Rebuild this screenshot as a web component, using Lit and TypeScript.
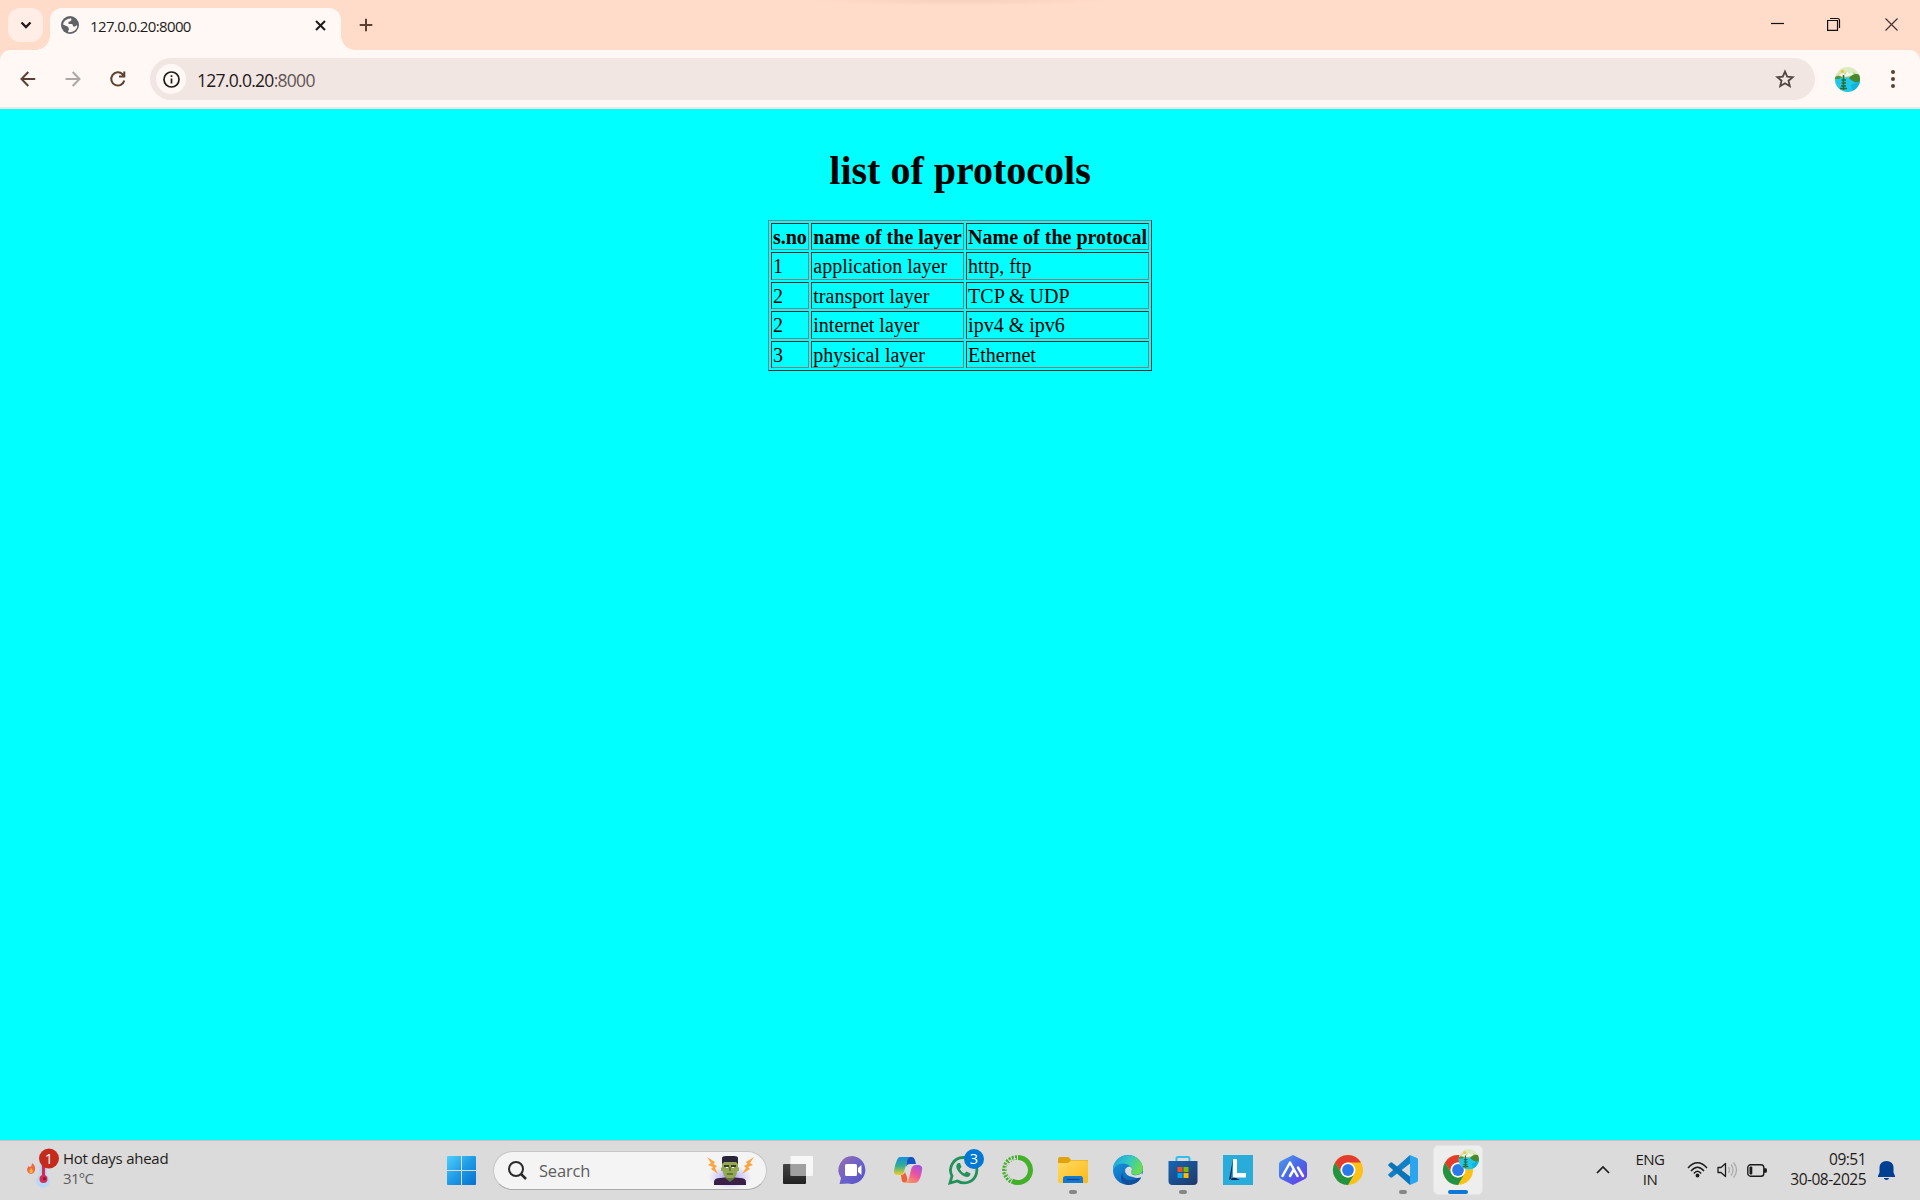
import { LitElement, html, svg, css } from "lit";
import { customElement } from "lit/decorators.js";

const chromeLogo = svg`
  <circle cx="15" cy="15" r="15" fill="#fbc116"/>
  <path d="M2 7.500A15 15 0 0 1 28 7.500H15A7.500 7.500 0 0 0 8.500 18.750Z" fill="#e33b2e"/>
  <path d="M2 7.500A15 15 0 0 0 15 30L21.500 18.750A7.500 7.500 0 0 1 8.500 18.750Z" fill="#229342"/>
  <circle cx="15" cy="15" r="7.500" fill="#fff"/><circle cx="15" cy="15" r="5.900" fill="#2a7be9"/>`;

const landscape = (id: string) => svg`
  <defs><clipPath id=${id}><circle cx="12.500" cy="12.500" r="12.500"/></clipPath></defs>
  <g clip-path="url(#${id})">
    <rect width="25" height="25" fill="#dcebc0"/>
    <path d="M0 10 5 6 8 8 12 4 15 7 18 5 25 9V12H0Z" fill="#b5cf96"/>
    <path d="M3 8 8 6 10 8 12 4 15 7 17 5 19 8 14 9 9 10Z" fill="#f5f6e6"/>
    <circle cx="7.500" cy="4.500" r="1.800" fill="#f4c04c"/>
    <rect y="10.500" width="25" height="15" fill="#1fc8ea"/>
    <path d="M0 10Q4 8 7 10.500L4 12H0Z" fill="#4f9636"/>
    <path d="M14 11Q19 5 25 8V15Q20 17 14 11Z" fill="#47892c"/>
    <path d="M16 18 25 14V22L18 25Z" fill="#0fb5dc"/>
    <path d="M8.500 8V23M6.500 13H11M6.500 16H11M6 19H11M5 21.500H12" stroke="#2c6b2c" stroke-width="1.500" fill="none"/>
  </g>`;

const appIcons = [
  { name: "Task view", run: "", art: svg`
    <defs><linearGradient id="tv" x2="0" y2="1"><stop stop-color="#444"/><stop offset="1" stop-color="#222"/></linearGradient></defs>
    <rect y="9" width="23" height="20" rx="1" fill="url(#tv)"/><rect x="7.500" y="1" width="22.500" height="20" rx="1" fill="#fff" fill-opacity=".78"/>
    <path d="M7.500 9H23V21H7.500Z" fill="#888" fill-opacity=".68"/>` },
  { name: "Chat", run: "", art: svg`
    <defs><linearGradient id="ch" x2="1" y2="1"><stop stop-color="#9c6bab"/><stop offset=".5" stop-color="#6c63c8"/><stop offset="1" stop-color="#5552c8"/></linearGradient></defs>
    <path d="M15 1A14 14 0 1 1 10 28.500L1.500 29 3 23A14 14 0 0 1 15 1Z" fill="url(#ch)"/>
    <rect x="7" y="9" width="12" height="12" rx="1.500" fill="#fff"/><path d="M20 13 23.500 10V20L20 17Z" fill="#fff"/>` },
  { name: "Copilot", run: "", art: svg`
    <defs><linearGradient id="ca" x2="0" y2="1"><stop stop-color="#168fdf"/><stop offset=".5" stop-color="#35ad91"/><stop offset="1" stop-color="#f1ce20"/></linearGradient>
    <linearGradient id="cb" x1=".8" y1="0" x2=".2" y2="1"><stop stop-color="#a452e5"/><stop offset=".5" stop-color="#ee559b"/><stop offset="1" stop-color="#ff9a5a"/></linearGradient></defs>
    <path d="M14 2H19Q21 2 22 5L23 9H17Q14 9 13 12Z" fill="#1554c4"/>
    <path d="M7 2H17Q14.500 3 13.500 8L11 17Q10 20 7 20H4Q1 20 1 16Q2 9 4 5Q5 2 7 2Z" fill="url(#ca)"/>
    <path d="M8 20Q11 20 12 17L14 22Q15 27 12 27.500Q9 28 8.500 24Z" fill="#ef6138"/>
    <path d="M23 10H26Q30 11 29 15Q28 22 26 25Q25 28 21 28H12Q15 27 16 23L18 15Q19 10 23 10Z" fill="url(#cb)"/>` },
  { name: "WhatsApp", run: "", art: svg`
    <path d="M15.500 2.500A12.700 12.700 0 1 1 9.500 26L2 28 4 21A12.700 12.700 0 0 1 15.500 2.500Z" fill="none" stroke="#22915b" stroke-width="2.800"/>
    <path d="M10.500 8C8 9 7.500 12 10 16Q14 21.500 19 22Q22 22 22.500 18.500L18.500 16.500 16.500 18.500Q13.500 17.500 11.800 14L13.500 12 12 8Z" fill="#22915b"/>
    <circle cx="26" cy="4" r="10" fill="#0078d4"/><text x="26" y="9.200" class="badge">3</text>` },
  { name: "Anaconda", run: "", art: svg`
    <path d="M15 2.500A12.500 12.500 0 1 1 9 26" fill="none" stroke="#43b02a" stroke-width="5"/>
    <path d="M14 2.500A12.500 12.500 0 0 0 9 26.500" fill="none" stroke="#43b02a" stroke-width="4.500" stroke-dasharray="2 1.100"/>
    <path d="M13 3.500A11.500 11.500 0 0 0 8 24.500" fill="none" stroke="#dbdbdb" stroke-width="1.200" stroke-dasharray="3 1.500"/>` },
  { name: "Explorer", run: "dot", art: svg`
    <defs><linearGradient id="fo" x2="1" y2="1"><stop stop-color="#ffdb63"/><stop offset="1" stop-color="#fbb917"/></linearGradient></defs>
    <path d="M0 4Q0 2 2 2H10Q11 2 13 5H29Q30 5 30 7V12H0Z" fill="#e2a10d"/><path d="M0 8H10L13 5.500H28Q30 5.500 30 7V27Q30 28 28.500 28H1.500Q0 28 0 26.500Z" fill="url(#fo)"/>
    <path d="M5 28V23.500Q5 21 7.500 21H22.500Q25 21 25 23.500V28Z" fill="#1379cf"/><path d="M8.500 24.500H21.500" stroke="#0c4b91" stroke-width="1.300"/>` },
  { name: "Edge", run: "", art: svg`
    <defs><linearGradient id="ea" x1="0" x2="1" y2=".4"><stop stop-color="#1c9dd9"/><stop offset=".5" stop-color="#2fc5cc"/><stop offset="1" stop-color="#66dc55"/></linearGradient>
    <linearGradient id="eb" x2=".5" y2="1"><stop stop-color="#1b9de2"/><stop offset="1" stop-color="#0b64bc"/></linearGradient></defs>
    <circle cx="15" cy="15" r="15" fill="url(#eb)"/>
    <path d="M9.500 17Q9 27 20 25Q24 24.500 27 22L28 23Q24 30 15 30Q5 28 9.500 17Z" fill="#104f99"/>
    <path d="M0 13C2-3 27-5 30 13Q30 20 23 20Q17 20 18 17Q20 15 18 12C14 7 4 7 0 15Z" fill="url(#ea)"/>
    <path d="M12 16Q12 12 16.500 11.500Q20 13 18.500 16Q17 19 20.500 20Q25 21 29 18L30 21 27.500 22.500Q24 23.500 20 22Q12.500 21 12 16Z" fill="#dadcdd"/>` },
  { name: "Store", run: "dot", art: svg`
    <defs><linearGradient id="st" x2="1" y2="1"><stop stop-color="#1666b5"/><stop offset="1" stop-color="#1e3769"/></linearGradient></defs>
    <path d="M8.500 6V3.500Q8.500 2 10 2H20Q21.500 2 21.500 3.500V6" fill="none" stroke="#35bdeb" stroke-width="2"/>
    <path d="M.5 6H29.500V26Q29.500 30 25.500 30H4.500Q.5 30 .5 26Z" fill="url(#st)"/>
    <path d="M9.500 12H14.500V17H9.500Z" fill="#f25022"/><path d="M15.500 12H20.500V17H15.500Z" fill="#7fba00"/><path d="M9.500 18H14.500V23H9.500Z" fill="#00a4ef"/><path d="M15.500 18H20.500V23H15.500Z" fill="#ffb900"/>` },
  { name: "Lenovo", run: "", art: svg`
    <rect width="30" height="30" fill="#29acd9"/><path d="M10 4 6 25 11 22 17 25H8Z" fill="#06275c"/><path d="M10 4H14V18H23V22.500H10Z" fill="#fff"/>` },
  { name: "Assistant", run: "", art: svg`
    <defs><linearGradient id="ai" x1="0" y1="0" x2="1" y2="1"><stop stop-color="#4c9fe9"/><stop offset=".5" stop-color="#4a67e6"/><stop offset="1" stop-color="#7038ea"/></linearGradient></defs>
    <path d="M15 0 27 6Q29 7 29 9V21Q29 23 27 24L15 30 3 24Q1 23 1 21V9Q1 7 3 6Z" fill="url(#ai)"/>
    <path d="M4.500 21 12 7.500 19.500 21M12 21 15.500 15M20 12.500 25 21" fill="none" stroke="#fff" stroke-width="2.500" stroke-linecap="round" stroke-linejoin="round"/>` },
  { name: "Chrome", run: "", art: chromeLogo },
  { name: "VS Code", run: "dot", art: svg`
    <path d="M22 8.500 4 22.500Q3 23 2 22L.4 20.500Q-.2 19.800 .6 19L22 0Z" fill="#1180c6"/><path d="M22 21.500 4 7.500Q3 7 2 8L.4 9.500Q-.2 10.200 .6 11L22 30Z" fill="#0b74b8"/>
    <path d="M22 0 29 3Q30 3.500 30 5V25Q30 26.500 29 27L22 30Z" fill="#2aa5ee"/>` },
  { name: "Chrome window", run: "active", art: svg`${chromeLogo}<g transform="translate(15.500 -6) scale(.82)">${landscape("avs")}</g>` },
];

@customElement("app-root")
export class AppRoot extends LitElement {
  static styles = css`
    :host { display: flex; flex-direction: column; width: 1920px; height: 1200px; overflow: hidden; background: #ffdbc9; font-family: "Open Sans", "Noto Sans", sans-serif; color: #1f1b1a; }
    * { box-sizing: border-box; }
    svg { display: block; flex: none; overflow: visible; }
    .strip { height: 50px; display: flex; padding: 8px 0 0 8px; flex: none; position: relative; }
    .hint { position: absolute; left: 810px; top: 0; width: 300px; height: 6px; background: radial-gradient(ellipse 50% 100% at 50% 0, #f6d1bc, #ffdbc900); }
    .search-tabs { width: 35px; height: 34px; border-radius: 12px; background: #ffede6; display: grid; place-items: center; }
    .tab { position: relative; width: 291px; height: 42px; margin-left: 7px; background: #fff8f5; border-radius: 12px 12px 0 0; display: flex; padding: 0 13px 8px 11px; align-items: center; }
    .tab::before, .tab::after { content: ""; position: absolute; bottom: 0; width: 14px; height: 14px; }
    .tab::before { left: -14px; background: radial-gradient(circle at 0 0, transparent 13.5px, #fff8f5 14px); }
    .tab::after { right: -14px; background: radial-gradient(circle at 100% 0, transparent 13.5px, #fff8f5 14px); }
    .tab-title { flex: 1; margin-left: 11px; font-size: 15px; letter-spacing: -.62px; line-height: 34px; padding-top: 1px; }
    .new-tab { margin: 10px 0 0 18px; }
    .window-buttons { margin-left: auto; display: flex; gap: 43px; padding: 9px 22px 0 0; }
    .close { margin-left: 2px; }
    .toolbar { height: 59px; flex: none; background: #fff8f5; border-radius: 10px 10px 0 0; border-bottom: 2px solid #f2e3dd; display: flex; align-items: center; padding: 1px 18px 0 20px; }
    .back { margin-right: 29px; } .forward { margin-right: 29px; }
    .address { width: 1665px; height: 42px; margin-left: 24px; border-radius: 21px; background: #f2e6e3; display: flex; align-items: center; padding: 0 20px 0 6px; }
    .site { width: 30px; height: 30px; border-radius: 50%; background: #fff8f5; display: grid; place-items: center; }
    .url { flex: 1; margin-left: 11px; font-size: 17.500px; letter-spacing: -.72px; line-height: 40px; padding-top: 1px; }
    .port { color: #605553; }
    .avatar { margin-left: 20px; } .more { margin-left: 26px; }
    .page { flex: 1; background: #0ff; overflow: hidden; font-family: "Liberation Serif", serif; color: #000; }
    .doc { zoom: 1.25; padding: 8px; text-align: center; }
    h1 { font-size: 32px; margin: 22.240px 0 20.640px; }
    table { margin: 0 auto; text-align: left; font-size: 16px; border: 1px outset #808080; border-spacing: 2px; }
    td, th { border: 1px inset #808080; padding: 1.800px 1px .2px; }
    .taskbar { height: 60px; flex: none; background: #dbdbdb; border-top: 1px solid #c9c2c2; display: flex; align-items: center; padding-bottom: 1px; }
    .weather { display: flex; width: 447px; padding-left: 26px; }
    .forecast { font-size: 15px; line-height: 20px; letter-spacing: -.25px; margin-top: -2px; }
    .temp { color: #5c5c5c; letter-spacing: -.7px; }
    .search { width: 274px; height: 39px; margin: 0 3px 0 17px; border: 1px solid #c6c6c6; border-bottom-color: #aaa; border-radius: 20px; background: #f4f4f4; display: flex; padding: 0 11px 0 14px; align-items: center; }
    .prompt { flex: 1; margin-left: 12px; font-size: 16.500px; letter-spacing: -.2px; color: #5d5d5d; }
    .apps { display: flex; }
    .app { width: 55px; height: 58px; display: grid; place-items: center; position: relative; }
    .app svg { position: relative; }
    .app.dot::after, .app.active::after { content: ""; position: absolute; bottom: 5px; width: 8px; height: 4px; border-radius: 2px; background: #868686; }
    .app.active::after { width: 20px; background: #0e78d4; }
    .app.active::before { content: ""; position: absolute; width: 48px; height: 48px; border-radius: 5px; background: #eee; border: 1px solid #e4e4e4; }
    .badge { font: 14.500px "Open Sans", sans-serif; fill: #fff; text-anchor: middle; }
    .tray { flex: 1; display: flex; align-items: center; justify-content: flex-end; padding-right: 25px; }
    .lang { width: 40px; margin: -1px 17px 1px 20px; text-align: center; font-size: 15px; letter-spacing: -.5px; line-height: 20px; }
    .status { display: flex; gap: 9px; align-items: center; }
    .clock { width: 87px; margin: -2px 12px 0 11px; text-align: right; font-size: 15.500px; letter-spacing: -.52px; line-height: 20px; white-space: nowrap; }
  `;

  render() {
    return html`
      <div class="strip">
        <div class="hint"></div>
        <div class="search-tabs"><svg width="12" height="8" viewBox="0 0 12 8"><path d="M1.500 1.500 6 6 10.500 1.500" fill="none" stroke="#1f1b1a" stroke-width="2.300"/></svg></div>
        <div class="tab">
          <svg width="18" height="18" viewBox="0 0 18 18"><circle cx="9" cy="9" r="9" fill="#5f6368"/><path d="M10 2.300 10.500 4Q9.500 6 7.500 5.800V8H11Q12 8.200 12 10.500H14Q15.800 10 16 8.500Q17 13 12 15.500Q8 17 7 15.800L8 13 7 10.800 2 8.500Q3 3 10 2.300Z" fill="#fff8f5"/></svg>
          <span class="tab-title">127.0.0.20:8000</span>
          <svg width="15" height="15" viewBox="0 0 15 15"><path d="M3 3 12 12M12 3 3 12" stroke="#1f1b1a" stroke-width="2"/></svg>
        </div>
        <svg class="new-tab" width="14" height="14" viewBox="0 0 14 14"><path d="M7 .7V13.300M.7 7H13.300" stroke="#5c4032" stroke-width="2"/></svg>
        <div class="window-buttons">
          <svg width="13" height="14" viewBox="0 0 13 14"><path d="M0 6.500H13" stroke="#111" stroke-width="1.200"/></svg>
          <svg width="13" height="14" viewBox="0 0 13 14"><path d="M.6 3.500H10.500V13.400H.6ZM3 1.500H10.500Q12.500 1.500 12.500 3.500V11" fill="none" stroke="#111" stroke-width="1.200"/></svg>
          <svg class="close" width="13" height="14" viewBox="0 0 13 14"><path d="M.5 1.500 12.500 13.500M12.500 1.500 .5 13.500" stroke="#433" stroke-width="1.200"/></svg>
        </div>
      </div>
      <div class="toolbar">
        <svg class="back" width="16" height="16" viewBox="0 0 16 16"><path d="M15.200 8H1.500M8.300 1 1.500 8 8.300 15" fill="none" stroke="#5c4032" stroke-width="2"/></svg>
        <svg class="forward" width="16" height="16" viewBox="0 0 16 16"><path d="M.5 8H14.300M7.700 1 14.500 8 7.700 15" fill="none" stroke="#b0a6a3" stroke-width="2"/></svg>
        <svg width="16" height="16" viewBox="0 0 16 16"><path d="M14.300 9.500A6.600 6.600 0 1 1 12.600 3.300L14.300 5.200M14.300.5V5.500H9" fill="none" stroke="#5c4032" stroke-width="2"/></svg>
        <div class="address">
          <div class="site"><svg width="17" height="17" viewBox="0 0 17 17"><circle cx="8.500" cy="8.500" r="7.500" fill="none" stroke="#1f1b1a" stroke-width="1.700"/><path d="M8.500 7.500V12.500M8.500 4.300V6.100" stroke="#1f1b1a" stroke-width="1.700"/></svg></div>
          <span class="url">127.0.0.20<span class="port">:8000</span></span>
          <svg width="20" height="20" viewBox="0 0 20 20"><path d="M10 2.600 12.200 7.600 17.700 8.100 13.500 11.700 14.800 17.200 10 14.300 5.200 17.200 6.500 11.700 2.300 8.100 7.800 7.600Z" fill="none" stroke="#514440" stroke-width="1.800"/></svg>
        </div>
        <svg class="avatar" width="25" height="25" viewBox="0 0 25 25">${landscape("avl")}</svg>
        <svg class="more" width="14" height="18" viewBox="0 0 14 18"><g fill="#5c4032"><circle cx="7" cy="2" r="2"/><circle cx="7" cy="9" r="2"/><circle cx="7" cy="16" r="2"/></g></svg>
      </div>
      <main class="page"><div class="doc">
        <h1>list of protocols</h1>
        <table>
          <tr><th>s.no</th><th>name of the layer</th><th>Name of the protocal</th></tr>
          <tr><td>1</td><td>application layer</td><td>http, ftp</td></tr>
          <tr><td>2</td><td>transport layer</td><td>TCP &amp; UDP</td></tr>
          <tr><td>2</td><td>internet layer</td><td>ipv4 &amp; ipv6</td></tr>
          <tr><td>3</td><td>physical layer</td><td>Ethernet</td></tr>
        </table>
      </div></main>
      <footer class="taskbar">
        <div class="weather">
          <svg width="37" height="40" viewBox="0 0 37 40">
            <path d="M6 13Q10 16 9 20Q8 24 4.500 24Q1 23 1 19Q2 17 2.500 16L4 17Q6 16 6 13Z" fill="#ee6844"/><path d="M5 18Q7.500 20 6.500 22.500Q5 24 3.500 22.500Q3 20 5 18Z" fill="#fbb43f"/>
            <path d="M14 10H21V25A7 7 0 1 1 13 25Z" fill="#b7daf8"/><path d="M17.500 12V29" stroke="#d8294f" stroke-width="3.200"/><circle cx="17.500" cy="29" r="4" fill="#d8294f"/><circle cx="18.500" cy="28.500" r="1.500" fill="#7c1b3c"/>
            <circle cx="23" cy="8.500" r="10" fill="#c42b1c"/><text class="badge" x="23" y="13.700">1</text>
          </svg>
          <div class="forecast"><div>Hot days ahead</div><div class="temp">31°C</div></div>
        </div>
        <svg width="29" height="29" viewBox="0 0 29 29">
          <defs><linearGradient id="win" gradientUnits="userSpaceOnUse" x1="0" y1="0" x2="29" y2="29"><stop stop-color="#4fd0fb"/><stop offset=".5" stop-color="#1f9be6"/><stop offset="1" stop-color="#0571cf"/></linearGradient></defs>
          <path d="M1 0H14V14H0V1Q0 0 1 0ZM15 0H28Q29 0 29 1V14H15ZM0 15H14V29H1Q0 29 0 28ZM15 15H29V28Q29 29 28 29H15Z" fill="url(#win)"/>
        </svg>
        <div class="search">
          <svg width="19" height="19" viewBox="0 0 19 19"><circle cx="8" cy="8" r="7" fill="none" stroke="#2a2a2a" stroke-width="2"/><path d="M13 13 18 18" stroke="#2a2a2a" stroke-width="2.500"/></svg>
          <span class="prompt">Search</span>
          <svg width="49" height="30" viewBox="0 0 49 30">
            <defs><radialGradient id="glow"><stop stop-color="#9583ff" stop-opacity=".9"/><stop offset="1" stop-color="#b8afff" stop-opacity="0"/></radialGradient></defs>
            <ellipse cx="24" cy="22" rx="22" ry="12" fill="url(#glow)"/>
            <path d="M8 30V27Q8 23 14 23L24 22 34 23Q40 23 40 27V30Z" fill="#3a2048"/><path d="M19 20H29V23L24 27 19 23Z" fill="#62743e"/>
            <path d="M16 6H32V12L33 13V16H31.500L30 21 27 23H21L18 21 16.500 16H15V13L16 12Z" fill="#94a853"/>
            <path d="M16 9V3Q16 1 20 1H28Q32 1 32 3V9L30 7H18Z" fill="#2b2438"/><path d="M18 11H23M25 11H30" stroke="#35402c" stroke-width="2"/><path d="M20 12.500H22M26 12.500H28" stroke="#fff"/><path d="M24 12V16M21 19H27" stroke="#4f6432" stroke-width="1.300"/>
            <path d="M1 2 9 7 7.500 9 11 11 9 13 12 19 5 14 7 12 2 10 5 8Z" fill="#ffa43d"/><path d="M48 2 40 7 41.500 9 38 11 40 13 36 19 44 14 42 12 47 10 44 8Z" fill="#ffa43d"/>
          </svg>
        </div>
        <div class="apps">${appIcons.map((a) => html`<div class="app ${a.run}"><svg width="30" height="30" viewBox="0 0 30 30">${a.art}</svg></div>`)}</div>
        <div class="tray">
          <svg width="14" height="8" viewBox="0 0 14 8"><path d="M1 7 7 1 13 7" fill="none" stroke="#1b1b1b" stroke-width="1.700"/></svg>
          <div class="lang">ENG<br>IN</div>
          <div class="status">
            <svg width="21" height="16" viewBox="0 0 21 16"><g fill="none" stroke="#1b1b1b" stroke-width="1.400"><path d="M1 6Q10.500-4.500 20 6"/><path d="M4 9Q10.500 1.500 17 9"/><path d="M6.800 11.500Q10.500 7 14.200 11.500"/></g><circle cx="10.500" cy="13.500" r="1.900" fill="#1b1b1b"/></svg>
            <svg width="21" height="16" viewBox="0 0 21 16"><path d="M1 5.500H4L8.500 1.500V14.500L4 10.500H1Z" fill="none" stroke="#1b1b1b" stroke-width="1.300" stroke-linejoin="round"/><path d="M11.500 5Q13.500 8 11.500 11M14 2.500Q18 8 14 13.500M16.500 .5Q22.500 8 16.500 15.500" fill="none" stroke="#aaa" stroke-width="1.300"/></svg>
            <svg width="21" height="13" viewBox="0 0 21 13"><rect x=".8" y=".8" width="16" height="11.400" rx="2.800" fill="none" stroke="#1b1b1b" stroke-width="1.400"/><rect x="2.500" y="2.500" width="2.800" height="8" rx="1" fill="#1b1b1b"/><path d="M17 4.300H19Q20 4.300 20 6.500Q20 8.700 19 8.700H17Z" fill="#1b1b1b"/></svg>
          </div>
          <div class="clock">09:51<br>30-08-2025</div>
          <svg width="17" height="19" viewBox="0 0 17 19"><path d="M8.500 0Q15 0 15.500 6.500V11.500L17 15V16H0V15L1.500 11.500V6.500Q2 0 8.500 0ZM5.800 17H11.200Q10.500 19 8.500 19Q6.500 19 5.800 17Z" fill="#003e92"/></svg>
        </div>
      </footer>`;
  }
}
